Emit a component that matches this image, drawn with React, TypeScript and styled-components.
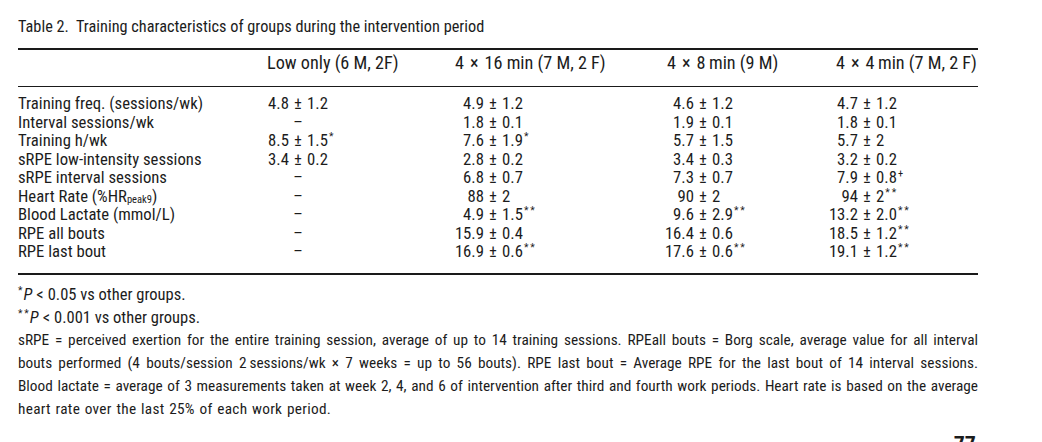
import React from "react";
import styled, { createGlobalStyle } from "styled-components";

const GlobalStyle = createGlobalStyle`
  html, body {
    margin: 0;
    padding: 0;
    background: #fff;
    overflow: hidden;
  }
  body {
    font-family: "Roboto Condensed", "Liberation Sans Narrow", "DejaVu Sans Condensed", Roboto, sans-serif;
    font-stretch: condensed;
    color: #1c1c1c;
  }
`;

type Value = [string, string, string?] | null;

const columns = [
	{ title: ["4", "16 min (7 M, 2 F)"], pad: 15, lead: 44 },
	{ title: ["4", "8\u2009min (9 M)"], pad: 22, lead: 49 },
	{ title: ["4", "4\u2009min (7 M, 2 F)"], pad: 21, lead: 43 },
];

const rows: { label: React.ReactNode; values: Value[] }[] = [
	{ label: "Training freq. (sessions/wk)", values: [["4.8", "1.2"], ["4.9", "1.2"], ["4.6", "1.2"], ["4.7", "1.2"]] },
	{ label: "Interval sessions/wk", values: [null, ["1.8", "0.1"], ["1.9", "0.1"], ["1.8", "0.1"]] },
	{ label: "Training h/wk", values: [["8.5", "1.5", "*"], ["7.6", "1.9", "*"], ["5.7", "1.5"], ["5.7", "2"]] },
	{ label: "sRPE low-intensity sessions", values: [["3.4", "0.2"], ["2.8", "0.2"], ["3.4", "0.3"], ["3.2", "0.2"]] },
	{ label: "sRPE interval sessions", values: [null, ["6.8", "0.7"], ["7.3", "0.7"], ["7.9", "0.8", "+"]] },
	{
		label: (
			<>
				Heart Rate (%HR<sub>peak9</sub>)
			</>
		),
		values: [null, ["88", "2"], ["90", "2"], ["94", "2", "**"]],
	},
	{ label: "Blood Lactate (mmol/L)", values: [null, ["4.9", "1.5", "**"], ["9.6", "2.9", "**"], ["13.2", "2.0", "**"]] },
	{ label: "RPE all bouts", values: [null, ["15.9", "0.4"], ["16.4", "0.6"], ["18.5", "1.2", "**"]] },
	{ label: "RPE last bout", values: [null, ["16.9", "0.6", "**"], ["17.6", "0.6", "**"], ["19.1", "1.2", "**"]] },
];

const leads = [34, ...columns.map((c) => c.lead)];

// printed line breaks of the table footnote
const paraLines = [
	"sRPE = perceived exertion for the entire training session, average of up to 14 training sessions. RPEall bouts = Borg scale, average value for all interval",
	"bouts performed (4 bouts/session 2\u2009sessions/wk × 7 weeks = up to 56 bouts). RPE last bout = Average RPE for the last bout of 14 interval sessions.",
	"Blood lactate = average of 3 measurements taken at week 2, 4, and 6 of intervention after third and fourth work periods. Heart rate is based on the average",
	"heart rate over the last 25% of each work period.",
];

export default function App() {
	return (
		<Page>
			<GlobalStyle />
			<Caption>Table 2.&nbsp; Training characteristics of groups during the intervention period</Caption>

			{/* SECTION Table */}
			<Table>
				<HeadRow>
					<span />
					<HeadCell $pad={12}>Low only (6 M, 2F)</HeadCell>
					{columns.map((col) => (
						<HeadCell key={col.title[1]} $pad={col.pad}>
							{col.title[0]}
							<Times>×</Times>
							{col.title[1]}
						</HeadCell>
					))}
				</HeadRow>
				<Body>
					{rows.map((row, i) => (
						<Row key={i}>
							<Label>{row.label}</Label>
							{row.values.map((v, j) => (
								<Cell key={j} $lead={leads[j]}>
									{v ? (
										<>
											<Mean>{v[0]}</Mean>
											<Pm>±</Pm>
											<Sd>
												{v[1]}
												{v[2] && <Mark>{v[2] === "**" ? "*\u2009*" : v[2]}</Mark>}
											</Sd>
										</>
									) : (
										<>
											<span />
											<Pm>–</Pm>
											<span />
										</>
									)}
								</Cell>
							))}
						</Row>
					))}
				</Body>
			</Table>

			{/* SECTION Footnotes */}
			<Notes>
				<Note>
					<Mark>*</Mark>
					<i>P</i>
					<Lt>&lt;</Lt>0.05 vs other groups.
				</Note>
				<Note>
					<Mark>*&thinsp;*</Mark>
					<i>P</i>
					<Lt>&lt;</Lt>0.001 vs other groups.
				</Note>
				<Para>
					{paraLines.map((line, i) => (
						<Line key={i} $last={i === paraLines.length - 1}>
							{line}
						</Line>
					))}
				</Para>
			</Notes>
			<PageNumber>77</PageNumber>
		</Page>
	);
}

const Page = styled.div`
	width: 1042px;
	height: 442px;
	box-sizing: border-box;
	padding: 17px 64px 0 18px;
	overflow: hidden;
`;

const Caption = styled.div`
	font-size: 16.3px;
	line-height: 20px;
	height: 20px;
	white-space: nowrap;
`;

const Table = styled.div`
	margin-top: 11px;
	border-top: 2px solid #1a1a1a;
	border-bottom: 2px solid #1a1a1a;
`;

const grid = `
	display: grid;
	grid-template-columns: 237px 185px 205px 170px 1fr;
`;

const HeadRow = styled.div`
	${grid};
	padding: 3px 0 13px;
	font-size: 18.2px;
	line-height: 20px;
	border-bottom: 1px solid #1a1a1a;
`;

const HeadCell = styled.div<{ $pad: number }>`
	padding-left: ${(p) => p.$pad}px;
	white-space: nowrap;
`;

const Times = styled.span`
	margin: 0 6px;
`;

const Body = styled.div`
	padding: 8px 0 11px;
	font-size: 16.7px;
`;

const Row = styled.div`
	${grid};
	line-height: 18.5px;
	height: 18.5px;
`;

const Label = styled.div`
	white-space: nowrap;
	sub {
		font-size: 10.5px;
		line-height: 0;
		vertical-align: -1px;
	}
`;

const Cell = styled.div<{ $lead: number }>`
	display: grid;
	grid-template-columns: ${(p) => p.$lead}px auto 1fr;
	white-space: nowrap;
`;

const Mean = styled.span`
	text-align: right;
`;

const Pm = styled.span`
	padding: 0 4px;
	text-align: center;
	min-width: 10px;
`;

const Sd = styled.span``;

const Mark = styled.sup`
	font-size: 0.62em;
	line-height: 0;
	vertical-align: 0.55em;
	margin-left: 1px;
`;

const Lt = styled.span`
	margin: 0 4px;
`;

const Notes = styled.div`
	margin-top: 8px;
	font-size: 16.5px;
	line-height: 23px;
`;

const Note = styled.div`
	white-space: nowrap;
	${Mark} {
		margin: 0 1px 0 0;
	}
`;

const Para = styled.div`
	font-size: 15.3px;
`;

const Line = styled.div<{ $last: boolean }>`
	text-align: ${(p) => (p.$last ? "left" : "justify")};
	text-align-last: ${(p) => (p.$last ? "left" : "justify")};
	white-space: nowrap;
	letter-spacing: ${(p) => (p.$last ? "0.3px" : "0")};
	word-spacing: ${(p) => (p.$last ? "0.8px" : "0")};
`;

const PageNumber = styled.div`
	margin-top: 12px;
	text-align: right;
	padding-right: 2px;
	font-size: 22px;
	font-weight: bold;
	line-height: 24px;
`;
